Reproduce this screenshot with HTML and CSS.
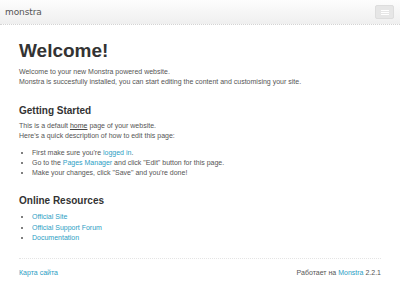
FILE: index.html
```html
<!DOCTYPE html>
<html>
<head>
<meta charset="utf-8">
<link rel="stylesheet" href="styles.css">
</head>
<body>
<header class="navbar">
  <span class="brand">monstra</span>
  <span class="toggle"><span class="bars"></span></span>
</header>
<main class="content">
  <h1>Welcome!</h1>
  <p>Welcome to your new Monstra powered website.<br>Monstra is succesfully installed, you can start editing the content and customising your site.</p>
  <h2>Getting Started</h2>
  <p>This is a default <u>home</u> page of your website.<br>Here's a quick description of how to edit this page:</p>
  <ul>
    <li>First make sure you're <a href="#">logged in</a>.</li>
    <li>Go to the <a href="#">Pages Manager</a> and click "Edit" button for this page.</li>
    <li>Make your changes, click "Save" and you're done!</li>
  </ul>
  <h2 class="h-res">Online Resources</h2>
  <ul class="res">
    <li><a href="#">Official Site</a></li>
    <li><a href="#">Official Support Forum</a></li>
    <li><a href="#">Documentation</a></li>
  </ul>
</main>
<footer class="footer">
  <a href="#">Карта сайта</a>
  <span>Работает на <a href="#">Monstra</a> 2.2.1</span>
</footer>
</body>
</html>
```
FILE: styles.css
```css
html, body { margin: 0; padding: 0; background: #fff; }
body { font-family: "Liberation Sans", Arial, sans-serif; color: #555; font-size: 7px; line-height: 10px; }
a { color: #2c9ec4; text-decoration: none; }
u { color: #444; }
.navbar {
  height: 24px;
  display: flex; align-items: center; justify-content: space-between;
  padding: 0 6px 0 5px;
  background: linear-gradient(#fdfdfd, #efefef);
  border-bottom: 1px dotted #d4d4d4;
}
.brand { font-family: "DejaVu Sans", sans-serif; font-size: 9px; color: #555; letter-spacing: -0.1px; }
.toggle {
  width: 19px; height: 14px; box-sizing: border-box;
  border: 1px solid #ddd; border-radius: 2px; background: #e6e6e6;
  display: flex; align-items: center; justify-content: center;
}
.bars { width: 8px; height: 1px; background: #fff; box-shadow: 0 -2px 0 #fff, 0 2px 0 #fff; }
.content { padding: 0 19px; }
h1 { margin: 15px 0 5px; font-size: 19px; line-height: 22px; color: #333; font-weight: bold; }
h2 { margin: 18px 0 4px; font-size: 10px; line-height: 12px; color: #333; font-weight: bold; }
h2.h-res { margin-top: 17px; }
p { margin: 0; }
ul { margin: 7px 0 0; padding-left: 13px; }
ul.res { margin-top: 5px; }
.res li { line-height: 10.5px; }
.footer {
  margin: 14px 19px 0;
  border-top: 1px dotted #e4e4e4;
  padding-top: 9px;
  display: flex; justify-content: space-between;
}
```
